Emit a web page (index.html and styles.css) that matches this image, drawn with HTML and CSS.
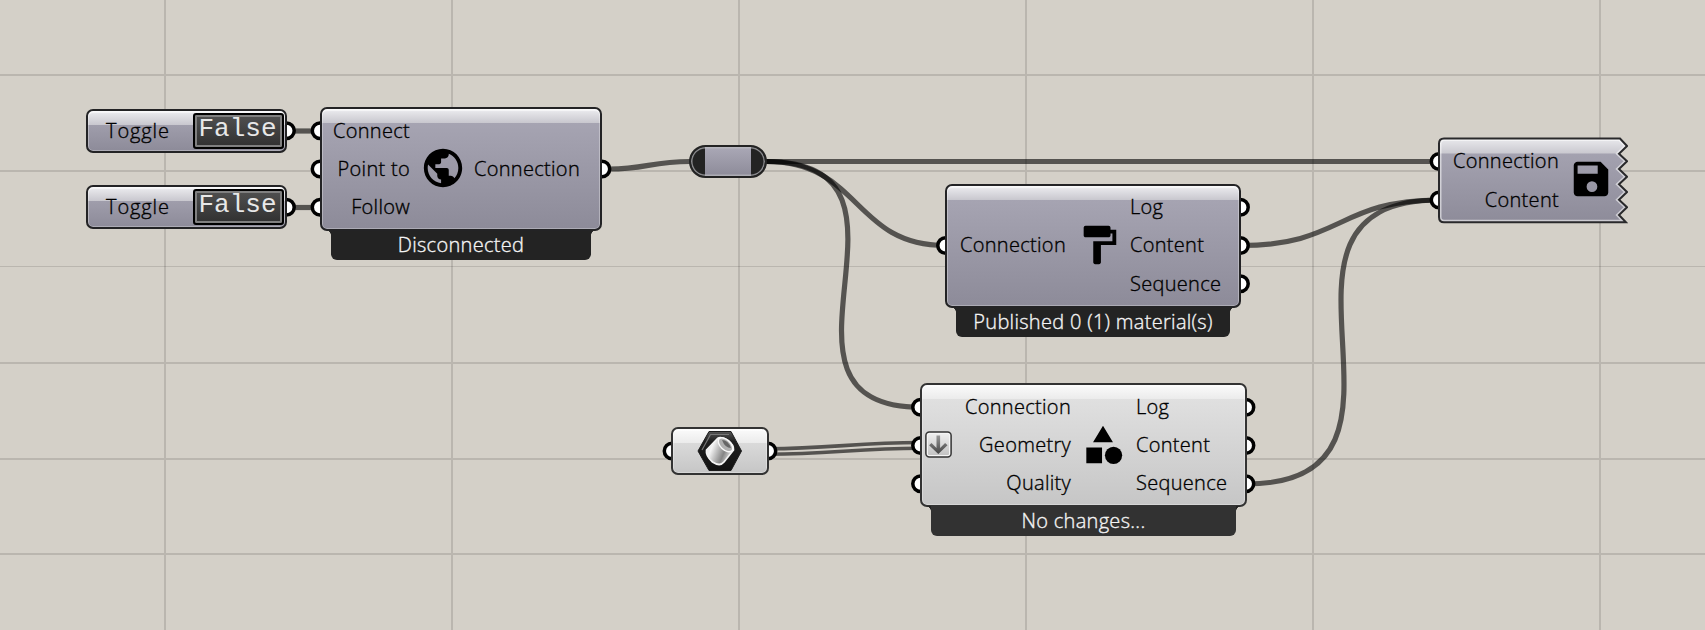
FILE: index.html
```
<!DOCTYPE html>
<html lang="en">
<head>
<meta charset="utf-8">
<title>Node graph</title>
<link rel="stylesheet" href="styles.css">
</head>
<body>
<main class="canvas">
  <svg class="wires" width="1705" height="630" viewBox="0 0 1705 630">
    <g class="grid">
      <path d="M165 0V630M452 0V630M739 0V630M1026 0V630M1313 0V630M1600 0V630M0 75H1705M0 171H1705M0 363H1705M0 459H1705M0 554H1705"/>
      <path class="thin" d="M0 266.5H1705"/>
    </g>
    <g class="links">
      <path d="M294 131H312"/>
      <path d="M294 207.5H312"/>
      <path d="M609 169C646 169 651 161.5 690 161.5"/>
      <path d="M766 161.5H1431"/>
      <path d="M766 161.5C861 161.5 853 245.5 945 245.5"/>
      <path d="M767 161.5C947 161.5 743 407.300 921 407.300"/>
      <path d="M1241 245.5C1342 245.5 1338 200 1439 200"/>
      <path d="M1246 484C1455 484 1230 200 1439 200"/>
    </g>
    <g class="links double">
      <path d="M768 448.7C830 448.7 857 442.5 920 442.5"/>
      <path d="M768 454.2C830 454.2 857 448.2 920 448.2"/>
    </g>
    <g class="ports">
      <circle cx="286.5" cy="130.8" r="7.7"/><circle cx="286.5" cy="207.3" r="7.7"/>
      <circle cx="320" cy="130.8" r="7.7"/><circle cx="320" cy="169" r="7.7"/><circle cx="320" cy="207.3" r="7.7"/>
      <circle cx="602" cy="169" r="7.7"/>
      <circle cx="945.5" cy="245.5" r="7.7"/>
      <circle cx="1240.5" cy="207.3" r="7.7"/><circle cx="1240.5" cy="245.5" r="7.7"/><circle cx="1240.5" cy="283.7" r="7.7"/>
      <circle cx="1439" cy="161.5" r="7.7"/><circle cx="1439" cy="200" r="7.7"/>
      <circle cx="672" cy="451" r="7.7"/><circle cx="768" cy="451" r="7.7"/>
      <circle cx="920.5" cy="407.3" r="7.7"/><circle cx="920.5" cy="445.5" r="7.7"/><circle cx="920.5" cy="483.8" r="7.7"/>
      <circle cx="1246" cy="407.3" r="7.7"/><circle cx="1246" cy="445.5" r="7.7"/><circle cx="1246" cy="483.8" r="7.7"/>
    </g>
  </svg>

  <section class="node toggle toggle-a"><span class="name">Toggle</span><span class="value">False</span></section>
  <section class="node toggle toggle-b"><span class="name">Toggle</span><span class="value">False</span></section>

  <section class="component connect">
    <div class="node">
      <div class="inputs"><span>Connect</span><span>Point to</span><span>Follow</span></div>
      <svg class="icon" viewBox="0 0 24 24"><path d="M12 2C6.480 2 2 6.480 2 12s4.480 10 10 10 10-4.480 10-10S17.520 2 12 2zm-1 17.930c-3.950-.49-7-3.850-7-7.930 0-.62.080-1.210.21-1.790L9 15v1c0 1.100.9 2 2 2v1.930zm6.900-2.540c-.26-.81-1-1.390-1.900-1.390h-1v-3c0-.55-.45-1-1-1H8v-2h2c.55 0 1-.45 1-1V7h2c1.100 0 2-.9 2-2v-.41c2.930 1.190 5 4.060 5 7.410 0 2.080-.8 3.970-2.100 5.390z"/></svg>
      <div class="outputs"><span>Connection</span></div>
    </div>
    <div class="message">Disconnected</div>
  </section>

  <section class="relay"></section>

  <section class="component publish">
    <div class="node">
      <div class="inputs"><span>Connection</span></div>
      <svg class="icon" viewBox="0 0 24 24"><path d="M18 4V3c0-.55-.45-1-1-1H5c-.55 0-1 .45-1 1v4c0 .55.45 1 1 1h12c.55 0 1-.45 1-1V6h1v4H9v11c0 .55.45 1 1 1h2c.55 0 1-.45 1-1v-9h8V4h-3z"/></svg>
      <div class="outputs"><span>Log</span><span>Content</span><span>Sequence</span></div>
    </div>
    <div class="message">Published 0 (1) material(s)</div>
  </section>

  <section class="save">
    <svg class="jagged" viewBox="0 0 190 87">
      <defs>
        <linearGradient id="body" x1="0" y1="0" x2="0" y2="1"><stop offset="0" stop-color="#a9a7b5"/><stop offset="1" stop-color="#8d8b99"/></linearGradient>
        <linearGradient id="shine" x1="0" y1="0" x2="0" y2="1"><stop offset="0" stop-color="#ededf0"/><stop offset="1" stop-color="#c8c7ce"/></linearGradient>
        <clipPath id="top"><path d="M0 0H190V16.500H0Z"/></clipPath>
        <clipPath id="edge"><path d="M6 1.500H182L189 9 181 16.700 189 24.300 181 32 189 39.700 181 47.300 189 55 181 62.700 189 70.300 181 78 188 85.300H6Q1 85.300 1 80V6.500Q1 1.500 6 1.500Z"/></clipPath>
      </defs>
      <g clip-path="url(#edge)">
        <path fill="url(#body)" d="M0 0H190V87H0Z"/>
        <path fill="url(#shine)" clip-path="url(#top)" d="M0 0H190V17H0Z"/>
        <path class="rim" d="M6 1.500H182L189 9 181 16.700 189 24.300 181 32 189 39.700 181 47.300 189 55 181 62.700 189 70.300 181 78 188 85.300H6Q1 85.300 1 80V6.500Q1 1.500 6 1.500Z"/>
      </g>
      <path class="outline" d="M6 1.500H182L189 9 181 16.700 189 24.300 181 32 189 39.700 181 47.300 189 55 181 62.700 189 70.300 181 78 188 85.300H6Q1 85.300 1 80V6.500Q1 1.500 6 1.500Z"/>
    </svg>
    <div class="inputs"><span>Connection</span><span>Content</span></div>
    <svg class="icon" viewBox="0 0 24 24"><path d="M17 3H5c-1.110 0-2 .9-2 2v14c0 1.100.89 2 2 2h14c1.100 0 2-.9 2-2V7l-4-4zm-4.500 15.800a2.800 2.800 0 1 1 0-5.600 2.800 2.800 0 0 1 0 5.600zM15.500 9.300H5V5h10.500v4.300z"/></svg>
  </section>

  <section class="node light geometry">
    <svg class="hex" viewBox="0 0 46 42">
      <defs>
        <linearGradient id="tube" x1="0" y1="0" x2="1" y2=".4"><stop offset="0" stop-color="#d8d8d8"/><stop offset=".3" stop-color="#f4f4f4"/><stop offset=".75" stop-color="#858585"/><stop offset="1" stop-color="#ddd"/></linearGradient>
        <linearGradient id="nut" x1="0" y1="0" x2="0" y2="1"><stop offset="0" stop-color="#555"/><stop offset=".25" stop-color="#202020"/><stop offset="1" stop-color="#111"/></linearGradient>
      </defs>
      <path fill="url(#nut)" stroke="#1c1c1c" d="M12 1.500H34L44.500 21 34 40.500H12L1 21Z"/>
      <path fill="none" stroke="#777" stroke-width="1.200" d="M5 20L13.500 4.500H32"/>
      <path fill="url(#tube)" stroke="#f4f4f4" stroke-width="1.700" stroke-linejoin="round" d="M9.500 20L20.500 8.500Q24 6 31 10.500 37 15 36.500 20L27 32Q23 37 15.500 32 8.500 26 9.500 20Z"/>
      <ellipse cx="28.500" cy="14.800" rx="8.800" ry="5" transform="rotate(43 28.500 14.800)" fill="#b0b0b0" stroke="#f8f8f8" stroke-width="1.500"/>
      <path fill="#666" d="M25 10Q31 10 34 18 28 18 25 10Z"/>
    </svg>
  </section>

  <section class="component shapes">
    <div class="node light">
      <div class="inputs"><span>Connection</span><span>Geometry</span><span>Quality</span></div>
      <svg class="icon" viewBox="0 0 24 24"><path d="M12 2l5.200 8.600H6.800zM3.300 13.300h8.200v8.200H3.300z"/><circle cx="17.500" cy="17.400" r="4.500"/></svg>
      <div class="outputs"><span>Log</span><span>Content</span><span>Sequence</span></div>
    </div>
    <div class="message">No changes...</div>
    <svg class="flatten" viewBox="0 0 27 27">
      <defs><linearGradient id="arrow" x1="0" y1="0" x2="0" y2="1"><stop offset="0" stop-color="#999"/><stop offset="1" stop-color="#444"/></linearGradient>
      <linearGradient id="btn" x1="0" y1="0" x2="0" y2="1"><stop offset="0" stop-color="#eee"/><stop offset="1" stop-color="#c4c4c4"/></linearGradient></defs>
      <rect x=".9" y=".9" width="25.200" height="25.200" rx="3.500" fill="#f5f5f5" stroke="#333" stroke-width="1.500"/>
      <rect x="3" y="3" width="21" height="21" rx="1" fill="url(#btn)"/>
      <path fill="url(#arrow)" d="M11.500 4.500h3.600v12.500l5-5 2.400 2.200-9.200 8.800-9.200-8.800 2.400-2.200 5 5z"/>
    </svg>
  </section>
</main>
</body>
</html>
```
FILE: styles.css
```
* { box-sizing: border-box; }
body { margin: 0; }

.canvas {
  position: relative;
  width: 1705px;
  height: 630px;
  overflow: hidden;
  background: #d4d0c8;
  font: 300 20px/38.2px "Open Sans", "Noto Sans", sans-serif;
  letter-spacing: .3px;
  -webkit-text-stroke: .35px currentColor;
  color: #000;
  white-space: nowrap;
}

.wires { display: block; }
.grid { stroke: rgba(0, 0, 0, .12); stroke-width: 2; fill: none; }
.grid .thin { stroke-width: 1; }
.links { fill: none; stroke: rgba(0, 0, 0, .6); stroke-width: 5.2; }
.double { stroke-width: 3.6; }
.ports { fill: #fff; stroke: #000; stroke-width: 3.5; }

.node {
  display: flex;
  border: 2px solid #232325;
  border-radius: 7px;
  background:
    linear-gradient(#ededf0, #c8c7ce) top / 100% 14px no-repeat,
    linear-gradient(#a9a7b5, #8d8b99);
  box-shadow: inset 0 0 0 1px rgba(255, 255, 255, .28), inset 0 2px 1px rgba(255, 255, 255, .6);
}
.light {
  border-color: #333;
  background:
    linear-gradient(#fbfbfb, #ebebeb) top / 100% 14px no-repeat,
    linear-gradient(#e3e3e3, #c6c6c6);
}

.toggle {
  position: absolute;
  left: 86px;
  width: 201px;
  height: 44px;
  padding: 2px 1px 2px 18px;
  justify-content: space-between;
}
.toggle-a { top: 109px; }
.toggle-b { top: 185px; }
.name { line-height: 35px; letter-spacing: .9px; }
.value {
  width: 91px;
  height: 36px;
  border: 2px solid #000;
  border-radius: 3px;
  background: linear-gradient(#505050, #303030);
  box-shadow: inset 0 0 0 2px #808080;
  color: #e8e8e8;
  font: 26px/28px "Liberation Mono", monospace;
  letter-spacing: 0;
  text-indent: -2px;
  text-align: center;
  -webkit-text-stroke: 0;
}

.component, .relay, .save, .geometry { position: absolute; }
.component .node { width: 100%; height: 124px; align-items: center; }
.inputs, .outputs { display: flex; flex-direction: column; flex: none; }
.inputs { align-items: flex-end; }
.outputs { align-items: flex-start; }
.icon { width: 46px; height: 46px; flex: none; }
.message {
  position: relative;
  height: 29px;
  margin: 0 11px;
  border-radius: 0 0 6px 6px;
  background: #232323;
  color: #f4f4f4;
  line-height: 28px;
  text-align: center;
}
.message::before, .message::after {
  content: "";
  position: absolute;
  top: -1px;
  width: 5px;
  height: 5px;
}
.message::before { left: -5px; background: radial-gradient(circle at 0 100%, transparent 4.500px, #232323 5px); }
.message::after { right: -5px; background: radial-gradient(circle at 100% 100%, transparent 4.500px, #232323 5px); }

.connect { left: 320px; top: 107px; width: 282px; }
.connect .inputs { width: 88px; }
.connect .icon { margin: 0 8px 2px 10px; }

.relay {
  left: 689px;
  top: 145px;
  width: 78px;
  height: 33px;
  border: 2px solid #232323;
  border-radius: 17px;
  background: linear-gradient(90deg, #232323 14px, transparent 14px 60px, #232323 60px), linear-gradient(#aaa8b6, #8d8b99);
  box-shadow: inset 0 0 0 1.500px rgba(190, 190, 195, .65);
}

.publish { left: 945px; top: 184px; width: 296px; }
.publish .inputs, .publish .outputs { padding-bottom: 1px; }
.publish .inputs { width: 119px; }
.publish .icon { margin: 0 8px 3px 10px; }

.save { left: 1438px; top: 137px; width: 190px; height: 87px; display: flex; align-items: center; }
.jagged { position: absolute; inset: 0; width: 190px; height: 87px; }
.rim { fill: none; stroke: rgba(255, 255, 255, .55); stroke-width: 5; }
.outline { fill: none; stroke: #29292b; stroke-width: 2; }
.save .inputs, .save .icon { position: relative; }
.save .inputs { width: 121px; }
.save .icon { margin: 0 0 3px 9px; }

.geometry { left: 671px; top: 427px; width: 98px; height: 48px; align-items: center; justify-content: center; }
.hex { width: 46px; height: 42px; }

.shapes { left: 920px; top: 383px; width: 327px; }
.shapes .inputs { width: 149px; }
.shapes .icon { margin: 0 10px 1px 9px; }
.shapes .message { background: #323232; }
.flatten { position: absolute; left: 5px; top: 48px; width: 27px; height: 27px; }
```
